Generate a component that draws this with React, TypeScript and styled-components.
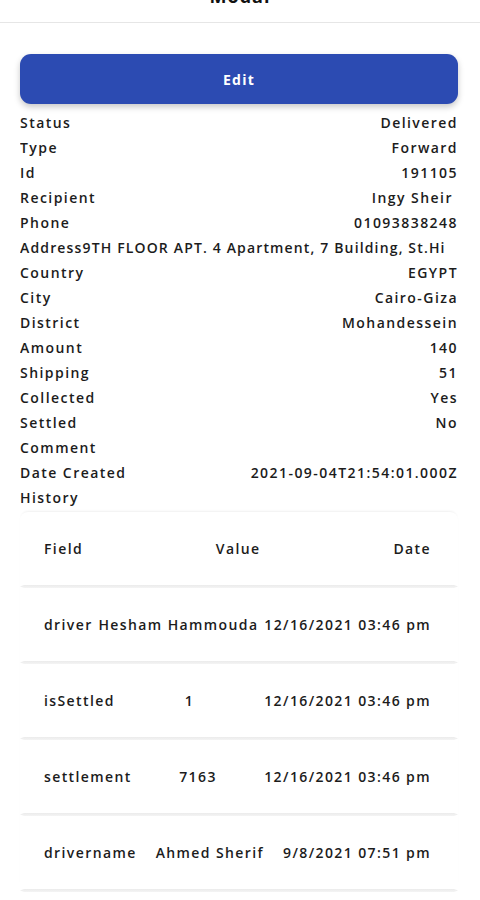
import React from "react";
import styled, { createGlobalStyle } from "styled-components";

const Global = createGlobalStyle`
  html, body { margin: 0; padding: 0; background: #ffffff; }
  body { font-family: "Open Sans", "Liberation Sans", sans-serif; color: #1c1c1c; overflow: hidden; }
  * { box-sizing: border-box; }
`;

const Page = styled.div`
  width: 480px;
  display: flex;
  flex-direction: column;
`;

const Header = styled.header`
  margin-top: -30px;
  height: 53px;
  display: flex;
  align-items: center;
  justify-content: center;
  border-bottom: 1px solid #e6e6e6;
`;

const Title = styled.h1`
  margin: 0;
  font-size: 18px;
  font-weight: 700;
  letter-spacing: 1px;
  color: #111;
`;

const Body = styled.main`
  padding: 31px 22px 0 20px;
  display: flex;
  flex-direction: column;
`;

const EditButton = styled.button`
  height: 50px;
  border: none;
  border-radius: 11px;
  background: #2c4bb2;
  color: #ffffff;
  font-family: inherit;
  font-size: 14px;
  font-weight: 700;
  letter-spacing: 1.3px;
  box-shadow: 0 3px 6px rgba(0, 0, 0, 0.22);
  margin-bottom: 6px;
`;

const DetailRow = styled.div<{ $tight?: boolean }>`
  height: 25px;
  display: flex;
  align-items: center;
  justify-content: space-between;
  font-size: 14px;
  font-weight: 600;
  letter-spacing: ${(p) => (p.$tight ? "1.15px" : "1.45px")};
  white-space: nowrap;
  overflow: hidden;
`;

const Label = styled.span``;
const Value = styled.span``;

const HistoryCard = styled.section`
  margin-top: 2px;
  border-radius: 8px;
  box-shadow: 0 -2px 3px -2px rgba(0, 0, 0, 0.12);
  display: flex;
  flex-direction: column;
`;

const TableRow = styled.div`
  height: 73px;
  padding: 0 27px 0 24px;
  display: flex;
  align-items: center;
  justify-content: space-between;
  font-size: 14px;
  font-weight: 600;
  letter-spacing: 1.4px;
  white-space: nowrap;
`;

const Divider = styled.hr`
  margin: 0;
  height: 3px;
  border: none;
  background: linear-gradient(#ebebeb, #f4f4f4);
  clip-path: polygon(0 50%, 4px 0, calc(100% - 4px) 0, 100% 50%, calc(100% - 4px) 100%, 4px 100%);
`;

const details: [string, string][] = [
  ["Status", "Delivered"],
  ["Type", "Forward"],
  ["Id", "191105"],
  ["Recipient", "Ingy Sheir\u00a0"],
  ["Phone", "01093838248"],
  ["Country", "EGYPT"],
  ["City", "Cairo-Giza"],
  ["District", "Mohandessein"],
  ["Amount", "140"],
  ["Shipping", "51"],
  ["Collected", "Yes"],
  ["Settled", "No"],
  ["Comment", ""],
  ["Date Created", "2021-09-04T21:54:01.000Z"],
  ["History", ""],
];

const history: [string, string, string][] = [
  ["driver", "Hesham Hammouda", "12/16/2021 03:46 pm"],
  ["isSettled", "1", "12/16/2021 03:46 pm"],
  ["settlement", "7163", "12/16/2021 03:46 pm"],
  ["drivername", "Ahmed Sherif", "9/8/2021 07:51 pm"],
];

export default function App() {
  return (
    <Page>
      <Global />
      <Header>
        <Title>Modal</Title>
      </Header>
      <Body>
        <EditButton>Edit</EditButton>
        {details.slice(0, 5).map(([l, v]) => (
          <DetailRow key={l}>
            <Label>{l}</Label>
            <Value>{v}</Value>
          </DetailRow>
        ))}
        <DetailRow $tight>
          <Label>Address9TH FLOOR APT. 4 Apartment, 7 Building, St.Hi</Label>
        </DetailRow>
        {details.slice(5).map(([l, v]) => (
          <DetailRow key={l}>
            <Label>{l}</Label>
            <Value>{v}</Value>
          </DetailRow>
        ))}
        <HistoryCard>
          <TableRow>
            <span>Field</span>
            <span>Value</span>
            <span>Date</span>
          </TableRow>
          <Divider />
          {history.map(([f, v, d]) => (
            <React.Fragment key={f}>
              <TableRow>
                <span>{f}</span>
                <span>{v}</span>
                <span>{d}</span>
              </TableRow>
              <Divider />
            </React.Fragment>
          ))}
        </HistoryCard>
      </Body>
    </Page>
  );
}
